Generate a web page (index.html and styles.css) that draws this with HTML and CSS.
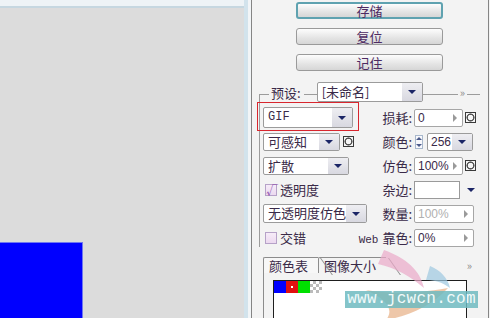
FILE: index.html
```html
<!DOCTYPE html>
<html lang="zh-CN">
<head>
    <meta charset="UTF-8">
    <title>存储为 Web 所用格式</title>
    <link rel="stylesheet" href="styles.css">
</head>
<body>
    <div class="screen">
        <!-- Preview canvas -->
        <div class="canvas-col">
            <div class="canvas-top"></div>
            <div class="canvas">
                <div class="blue-block"></div>
            </div>
        </div>
        <div class="divider"></div>

        <!-- Settings panel -->
        <div class="panel">
            <div class="actions">
                <button class="btn btn-focus">存储</button>
                <button class="btn">复位</button>
                <button class="btn">记住</button>
            </div>

            <div class="group">
                <div class="group-head">
                    <span class="head-label">预设:</span>
                    <div class="select preset">
                        <span class="select-text">[未命名]</span>
                        <span class="select-arrow"></span>
                    </div>
                    <span class="more">»</span>
                </div>

                <div class="settings">
                    <div class="cell-left">
                        <div class="select select-gif">
                            <span class="select-text mono">GIF</span>
                            <span class="select-arrow"></span>
                        </div>
                    </div>
                    <span class="field-label">损耗:</span>
                    <div class="cell-right">
                        <div class="input w49"><span>0</span><i class="tri"></i></div>
                        <span class="opt-btn"></span>
                    </div>

                    <div class="cell-left">
                        <div class="select w77">
                            <span class="select-text">可感知</span>
                            <span class="select-arrow"></span>
                        </div>
                        <span class="opt-btn"></span>
                    </div>
                    <span class="field-label">颜色:</span>
                    <div class="cell-right">
                        <span class="spin"><i class="up"></i><i class="down"></i></span>
                        <div class="select w46">
                            <span class="select-text num">256</span>
                            <span class="select-arrow"></span>
                        </div>
                    </div>

                    <div class="cell-left">
                        <div class="select w86">
                            <span class="select-text">扩散</span>
                            <span class="select-arrow"></span>
                        </div>
                    </div>
                    <span class="field-label">仿色:</span>
                    <div class="cell-right">
                        <div class="input w49"><span>100%</span><i class="tri"></i></div>
                        <span class="opt-btn"></span>
                    </div>

                    <div class="cell-left">
                        <label class="check"><span class="box checked">√</span>透明度</label>
                    </div>
                    <span class="field-label">杂边:</span>
                    <div class="cell-right">
                        <div class="swatch-box"></div>
                        <span class="plain-arrow"></span>
                    </div>

                    <div class="cell-left">
                        <div class="select w104">
                            <span class="select-text">无透明度仿色</span>
                            <span class="select-arrow"></span>
                        </div>
                    </div>
                    <span class="field-label">数量:</span>
                    <div class="cell-right">
                        <div class="input w60 disabled"><span>100%</span><i class="tri"></i></div>
                    </div>

                    <div class="cell-left">
                        <label class="check"><span class="box"></span>交错</label>
                    </div>
                    <span class="field-label"><span class="web">Web</span> 靠色:</span>
                    <div class="cell-right">
                        <div class="input w60"><span>0%</span><i class="tri"></i></div>
                    </div>
                </div>

                <div class="highlight"></div>
            </div>

            <div class="tabs">
                <div class="tab-strip">
                    <span class="tab active">颜色表</span>
                    <span class="tab">图像大小</span>
                    <span class="more tab-more">»</span>
                </div>
                <div class="tab-body">
                    <div class="color-table">
                        <span class="chip blue"></span>
                        <span class="chip red"><i></i></span>
                        <span class="chip green"></span>
                        <span class="chip clear"></span>
                    </div>
                </div>
            </div>

            <!-- site watermark -->
            <div class="watermark">
                <svg class="wm-art" width="130" height="70" viewBox="0 0 130 70">
                    <path d="M34 0 C56 8 70 20 74 38 C60 26 46 18 28 14 Z" fill="#e9a8c8" opacity="0.7"/>
                    <path d="M80 16 C90 20 98 28 100 38 C92 32 84 30 76 30 Z" fill="#9cc8e0" opacity="0.7"/>
                    <path d="M16 40 C40 44 62 44 98 38 C82 56 58 66 36 70 C44 60 38 50 16 40 Z" fill="#e8b48c" opacity="0.75"/>
                </svg>
                <span class="wm-text">www.jcwcn.com</span>
            </div>
        </div>
    </div>
</body>
</html>
```

FILE: styles.css
```css
body {
    margin: 0;
    font-family: "Noto Sans CJK SC", "Liberation Sans", sans-serif;
    font-size: 12px;
    color: #3a2a48;
    background-color: #f3f3f3;
}

.screen {
    display: flex;
    width: 490px;
    height: 318px;
    overflow: hidden;
}

/* ---------- canvas ---------- */

.canvas-col {
    width: 244px;
    display: flex;
    flex-direction: column;
}

.canvas-top {
    height: 6px;
    background-color: #eef3f6;
    border-bottom: 2px solid #c6d7e0;
}

.canvas {
    flex: 1;
    background-color: #dcdcdc;
    display: flex;
    flex-direction: column;
    justify-content: flex-end;
}

.blue-block {
    width: 82px;
    height: 75px;
    background-color: #0000ff;
    border-top: 1px solid #6f78f0;
    border-right: 1px solid #6f78f0;
}

.divider {
    width: 7px;
    background: linear-gradient(to right, #d2e3ec 0, #d2e3ec 4px, #f2f5f7 4px, #f2f5f7 7px);
}

/* ---------- panel ---------- */

.panel {
    position: relative;
    flex: 1;
    background-color: #f3f3f3;
    border-left: 1px solid #858585;
    border-right: 1px solid #858585;
    margin-right: 1px;
}

.actions {
    display: flex;
    flex-direction: column;
    gap: 9px;
    padding: 2px 0 0 44px;
}

.btn {
    width: 147px;
    height: 17px;
    padding: 0;
    font-family: "Noto Sans CJK SC", sans-serif;
    font-size: 13px;
    line-height: 15px;
    color: #4d2a62;
    background: linear-gradient(#fdfdfd, #e4e4e4 60%, #d6d6d6);
    border: 1px solid #9a9a9a;
    border-radius: 3px;
}

.btn-focus {
    border: 2px solid #5fa2b0;
    line-height: 13px;
}

/* ---------- settings group ---------- */

.group {
    position: relative;
    margin: 23px 8px 0 7px;
    border-top: 1px solid #9c9c9c;
    border-left: 1px solid #9c9c9c;
}

.group-head {
    display: flex;
    align-items: center;
    height: 20px;
    margin-top: -13px;
    padding-left: 9px;
}

.head-label {
    background-color: #f3f3f3;
    padding: 0 3px 0 2px;
    margin-right: 13px;
    font-size: 13px;
}

.more {
    margin-left: auto;
    margin-right: 13px;
    padding: 0 2px;
    background-color: #f3f3f3;
    color: #8a8a8a;
    font-size: 11px;
    line-height: 10px;
}

.select {
    display: flex;
    align-items: stretch;
    height: 18px;
    background-color: #ffffff;
    border: 1px solid #9b9b9b;
    border-radius: 2px;
    box-sizing: border-box;
}

.select-text {
    flex: 1;
    padding-left: 4px;
    font-size: 13px;
    line-height: 16px;
    white-space: nowrap;
}

.select-arrow {
    width: 20px;
    flex: none;
    position: relative;
    background: linear-gradient(#eeeef2, #d8d8e0);
}

.select-arrow::after {
    content: "";
    position: absolute;
    left: 6px;
    top: 50%;
    margin-top: -2px;
    border-left: 4px solid transparent;
    border-right: 4px solid transparent;
    border-top: 4px solid #1b2566;
}

.preset {
    width: 106px;
    height: 20px;
}

.preset .select-text {
    line-height: 18px;
}

.mono {
    font-family: "Liberation Mono", monospace;
    font-size: 12px;
}

.num {
    font-family: "Liberation Sans", sans-serif;
    font-size: 12px;
    padding-left: 3px;
}

.select-gif {
    width: 90px;
    height: 21px;
}

.select-gif .select-text {
    line-height: 19px;
}

.w77 { width: 77px; }
.w86 { width: 86px; }
.w104 { width: 104px; height: 19px; }
.w46 { width: 46px; }
.w49 { width: 49px; }
.w60 { width: 60px; }

.settings {
    display: grid;
    grid-template-columns: 94px 55px 1fr;
    grid-auto-rows: 19px;
    row-gap: 5px;
    margin-top: 6px;
    padding-left: 3px;
    font-size: 13px;
}

.settings > div,
.settings > span {
    align-self: center;
}

.cell-left {
    display: flex;
    align-items: center;
    gap: 3px;
}

.cell-right {
    display: flex;
    align-items: center;
    gap: 2px;
    margin-left: 2px;
}

.field-label {
    text-align: right;
    white-space: nowrap;
}

.web {
    font-family: "Liberation Mono", monospace;
    font-size: 11px;
    margin-right: 1px;
}

.input {
    display: flex;
    align-items: center;
    justify-content: space-between;
    height: 18px;
    box-sizing: border-box;
    padding: 0 5px 0 3px;
    background-color: #ffffff;
    border: 1px solid #a6a6a6;
    border-radius: 2px;
    font-family: "Liberation Sans", sans-serif;
    font-size: 12px;
}

.input.disabled {
    color: #b0b0b0;
}

.tri {
    width: 0;
    height: 0;
    border-top: 4px solid transparent;
    border-bottom: 4px solid transparent;
    border-left: 4px solid #9a9a9a;
}

.opt-btn {
    width: 9px;
    height: 9px;
    border: 1px solid #3a3a3a;
    background: radial-gradient(circle, #f6f6f6 0, #f6f6f6 2.5px, #555 3px, #555 3.8px, #f6f6f6 4.3px);
}

.spin {
    display: flex;
    flex-direction: column;
    justify-content: space-between;
    align-items: center;
    width: 8px;
    height: 14px;
    padding: 1px 0;
    box-sizing: border-box;
    border: 1px solid #a8b8cc;
    background-color: #f8f8fc;
    margin: 0 2px 0 1px;
}

.spin i {
    width: 0;
    height: 0;
    border-left: 3px solid transparent;
    border-right: 3px solid transparent;
}

.spin .up { border-bottom: 3px solid #4a5a8a; }
.spin .down { border-top: 3px solid #4a5a8a; }

.swatch-box {
    width: 46px;
    height: 18px;
    box-sizing: border-box;
    border: 1px solid #9a9a9a;
    background-color: #ffffff;
}

.plain-arrow {
    margin-left: 5px;
    border-left: 4px solid transparent;
    border-right: 4px solid transparent;
    border-top: 4px solid #1b2566;
}

.check {
    display: flex;
    align-items: center;
    gap: 3px;
    padding-left: 2px;
}

.box {
    width: 12px;
    height: 12px;
    box-sizing: border-box;
    border: 1px solid #b6a2c8;
    background: linear-gradient(#f6ecf8, #ecd9f0);
    color: #8c4aa8;
    font-size: 12px;
    line-height: 10px;
    text-align: center;
}

.highlight {
    position: absolute;
    left: -3px;
    top: 7px;
    width: 100px;
    height: 27px;
    border: 1px solid #d8262e;
}

/* ---------- tabs ---------- */

.tabs {
    margin: 10px 0 0 11px;
}

.tab-strip {
    display: flex;
    align-items: flex-end;
    height: 16px;
}

.tab {
    position: relative;
    height: 15px;
    padding: 0 10px 0 5px;
    border-top: 1px solid #8c8c8c;
    border-left: 1px solid #8c8c8c;
    border-top-left-radius: 2px;
    font-size: 13px;
    line-height: 15px;
}

.tab::after {
    content: "";
    position: absolute;
    right: -3px;
    top: 0;
    width: 1px;
    height: 17px;
    background-color: #8c8c8c;
    transform: skewX(35deg);
    transform-origin: top;
}

.tab.active {
    background-color: #f7f7f7;
    z-index: 1;
}

.tab-more {
    align-self: center;
    margin-right: 14px;
}

.tab-body {
    height: 46px;
    border-left: 1px solid #8c8c8c;
    padding: 7px 0 0 9px;
}

.color-table {
    display: flex;
    width: 192px;
    height: 40px;
    border: 1px solid #1e1e1e;
    border-bottom: none;
    background-color: #ffffff;
}

.chip {
    width: 12px;
    height: 12px;
    position: relative;
}

.chip.blue { background-color: #0000ff; }
.chip.red { background-color: #e01010; }
.chip.green { background-color: #00e000; }

.chip.red i {
    position: absolute;
    left: 5px;
    top: 5px;
    width: 2px;
    height: 2px;
    background-color: #ffffff;
}

.chip.clear {
    background-color: #ffffff;
    background-image:
        linear-gradient(45deg, #bbb 25%, transparent 25%, transparent 75%, #bbb 75%),
        linear-gradient(45deg, #bbb 25%, transparent 25%, transparent 75%, #bbb 75%);
    background-size: 6px 6px;
    background-position: 0 0, 3px 3px;
}

/* ---------- watermark ---------- */

.watermark {
    position: absolute;
    left: 93px;
    top: 250px;
    width: 135px;
    height: 68px;
    pointer-events: none;
}

.wm-art {
    position: absolute;
    left: 5px;
    top: 0;
}

.wm-text {
    position: absolute;
    left: 0;
    top: 41px;
    width: 133px;
    height: 17px;
    background-color: rgba(110, 186, 192, 0.85);
    color: #f2fafa;
    font-family: "Liberation Mono", monospace;
    font-size: 16px;
    line-height: 17px;
    letter-spacing: 0.3px;
    text-align: center;
}
```
